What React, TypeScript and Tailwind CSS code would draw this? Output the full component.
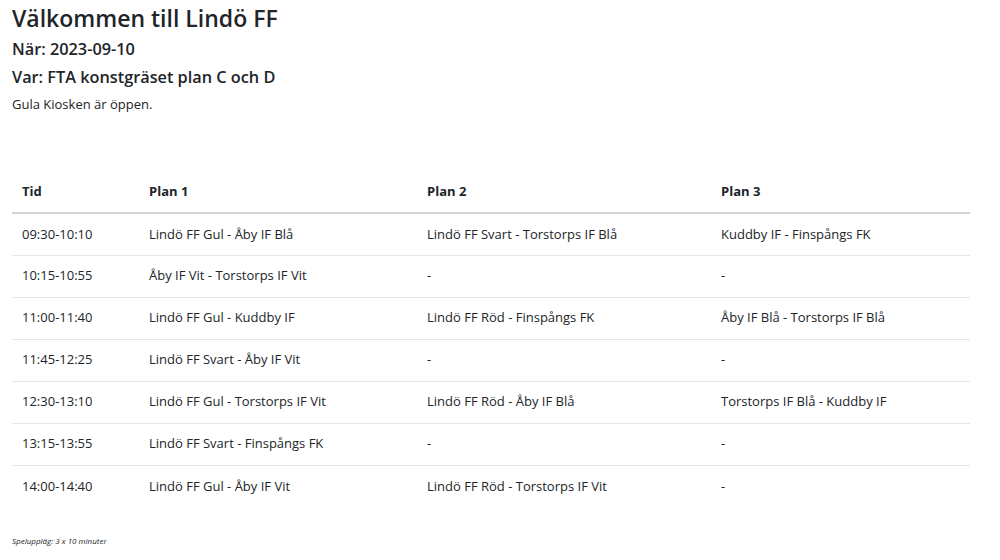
const rows: string[][] = [
  ["09:30-10:10", "Lindö FF Gul - Åby IF Blå", "Lindö FF Svart - Torstorps IF Blå", "Kuddby IF - Finspångs FK"],
  ["10:15-10:55", "Åby IF Vit - Torstorps IF Vit", "-", "-"],
  ["11:00-11:40", "Lindö FF Gul - Kuddby IF", "Lindö FF Röd - Finspångs FK", "Åby IF Blå - Torstorps IF Blå"],
  ["11:45-12:25", "Lindö FF Svart - Åby IF Vit", "-", "-"],
  ["12:30-13:10", "Lindö FF Gul - Torstorps IF Vit", "Lindö FF Röd - Åby IF Blå", "Torstorps IF Blå - Kuddby IF"],
  ["13:15-13:55", "Lindö FF Svart - Finspångs FK", "-", "-"],
  ["14:00-14:40", "Lindö FF Gul - Åby IF Vit", "Lindö FF Röd - Torstorps IF Vit", "-"],
];

const headers = ["Tid", "Plan 1", "Plan 2", "Plan 3"];

export default function App() {
  return (
    <div className="min-h-[560px] bg-white px-3 pt-[3px] text-[#212529] font-['Open_Sans',sans-serif]">
      <h1 className="text-[23px] leading-[30px] font-semibold">Välkommen till Lindö FF</h1>
      <h2 className="mt-[3px] text-[16.3px] leading-[26px] font-semibold">När: 2023-09-10</h2>
      <h3 className="mt-[2px] text-[16.3px] leading-[26px] font-semibold">Var: FTA konstgräset plan C och D</h3>
      <p className="mt-[4px] text-[13px] leading-[20px]">Gula Kiosken är öppen.</p>

      <table className="mt-[57px] w-[958px] border-collapse text-[13px] table-fixed">
        <colgroup>
          <col className="w-[127px]" />
          <col className="w-[278px]" />
          <col className="w-[294px]" />
          <col />
        </colgroup>
        <thead>
          <tr className="h-[42px] border-b-2 border-[#d4d4d4]">
            {headers.map((h) => (
              <th key={h} className="px-[10px] text-left font-bold">
                {h}
              </th>
            ))}
          </tr>
        </thead>
        <tbody>
          {rows.map((r, i) => (
            <tr key={i} className={`h-[42px] ${i < rows.length - 1 ? "border-b border-[#e6e6e6]" : ""}`}>
              {r.map((c, j) => (
                <td key={j} className="px-[10px] text-left">
                  {c}
                </td>
              ))}
            </tr>
          ))}
        </tbody>
      </table>

      <p className="mt-[28px] text-[8px] italic">Speluppläg: 3 x 10 minuter</p>
    </div>
  );
}
